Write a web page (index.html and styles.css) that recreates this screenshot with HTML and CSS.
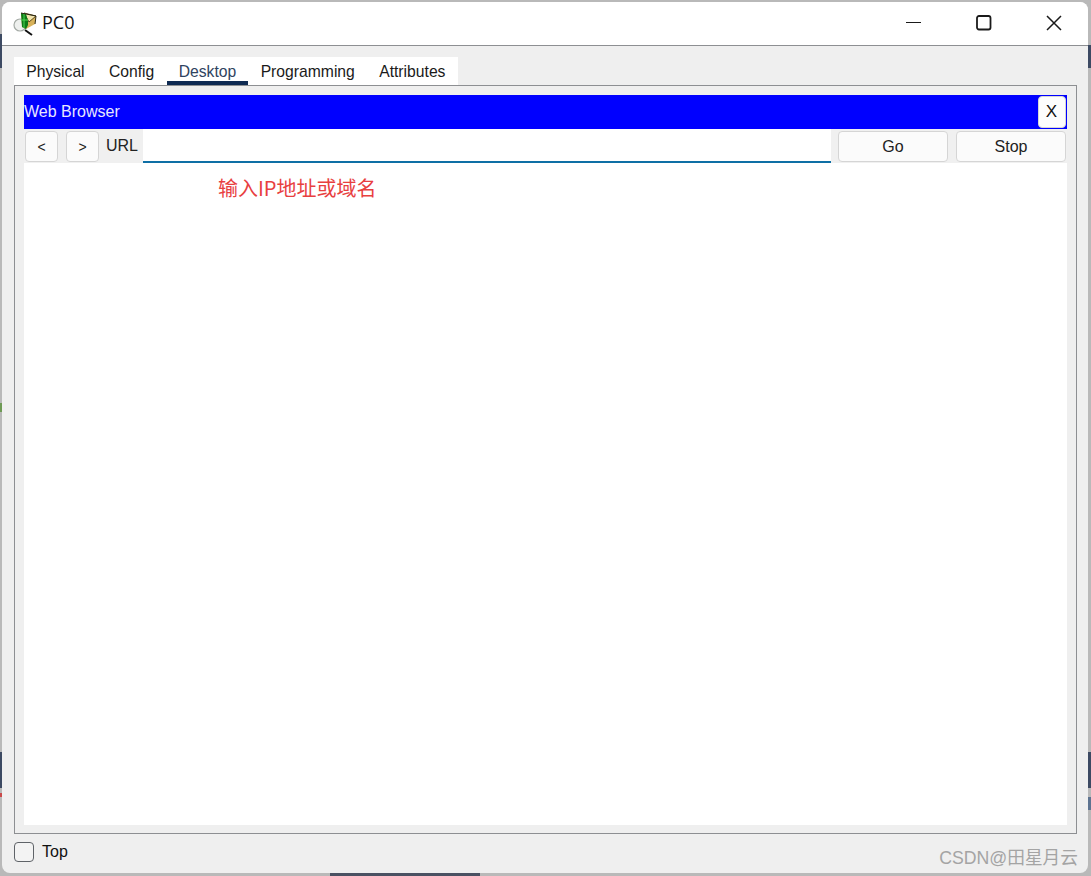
FILE: index.html
```html
<!DOCTYPE html>
<html lang="zh">
<head>
<meta charset="utf-8">
<title>PC0</title>
<link rel="stylesheet" href="styles.css">
</head>
<body>
<div class="window">
  <header class="titlebar">
    <svg class="appicon" width="26" height="26" viewBox="0 0 26 26">
      <circle cx="7" cy="15" r="6" fill="#eef0ee" stroke="#a4aaa5" stroke-width="1.2"/>
      <path d="M12 20l7 5" stroke="#111" stroke-width="2" fill="none"/>
      <path d="M8 3l15 3 -1 8 -9 5 -4 -2z" fill="#d8b25a"/>
      <path d="M11 3l12 3 -7 6z" fill="#f3e5ae" stroke="#5b4a1d" stroke-width="1"/>
      <path d="M8 3l5 1 2 7v4l-2 4 -4 -2z" fill="#0d7a16"/>
      <path d="M11 4v14M8 10h7" stroke="#4fd653" stroke-width="1" fill="none"/>
      <path d="M8 3l15 3 -1 8" stroke="#2d2a16" stroke-width="1" fill="none"/>
    </svg>
    <span class="wintitle">PC0</span>
    <div class="wincontrols">
      <svg class="wc" width="16" height="16" viewBox="0 0 16 16"><path d="M0 7.5h15" stroke="#1a1a1a" stroke-width="1.2"/></svg>
      <svg class="wc" width="16" height="16" viewBox="0 0 16 16"><rect x="1" y="1" width="13.5" height="13.5" rx="2" fill="none" stroke="#1a1a1a" stroke-width="1.8"/></svg>
      <svg class="wc" width="16" height="16" viewBox="0 0 16 16"><path d="M1 1l14 14M15 1L1 15" stroke="#1a1a1a" stroke-width="1.5"/></svg>
    </div>
  </header>
  <main class="content">
    <nav class="tabs">
      <span class="tab">Physical</span>
      <span class="tab">Config</span>
      <span class="tab active">Desktop</span>
      <span class="tab">Programming</span>
      <span class="tab">Attributes</span>
    </nav>
    <section class="panel">
      <div class="browser">
        <div class="browserhead">
          <span>Web Browser</span>
          <button class="closebtn">X</button>
        </div>
        <div class="toolbar">
          <button class="navbtn">&lt;</button>
          <button class="navbtn">&gt;</button>
          <span class="urllabel">URL</span>
          <div class="urlinput"></div>
          <button class="actbtn">Go</button>
          <button class="actbtn">Stop</button>
        </div>
        <div class="page">
          <p class="note">输入IP地址或域名</p>
        </div>
      </div>
    </section>
    <footer class="bottom">
      <span class="check"></span>
      <span class="toplabel">Top</span>
    </footer>
  </main>
</div>
<div class="watermark">CSDN@田星月云</div>
</body>
</html>
```

FILE: styles.css
```css
* { box-sizing: border-box; }
html, body { margin: 0; height: 100%; overflow: hidden; }
body {
  width: 1091px;
  height: 876px;
  padding: 2px 3px 3px 2px;
  font-family: "Liberation Sans", Arial, sans-serif;
  color: #111;
  background-color: #b9b9b9;
  background-repeat: no-repeat;
  background-image:
    linear-gradient(#b9b9b9 34px, #3d4a63 34px, #3d4a63 68px, #b9b9b9 68px, #b9b9b9 403px, #6e9a55 403px, #6e9a55 412px, #b9b9b9 412px, #b9b9b9 752px, #3d4a63 752px, #3d4a63 788px, #b9b9b9 788px, #b9b9b9 793px, #c9494a 793px, #c9494a 797px, #b9b9b9 797px),
    linear-gradient(#b9b9b9 45px, #3d4a63 45px, #3d4a63 68px, #b9b9b9 68px, #b9b9b9 752px, #3d4a63 752px, #3d4a63 788px, #b9b9b9 788px, #b9b9b9 797px, #5d7390 797px, #5d7390 810px, #b9b9b9 810px),
    linear-gradient(#4a5162, #4a5162);
  background-size: 4px 100%, 3px 100%, 150px 3px;
  background-position: 0 0, 100% 0, 330px 100%;
}
.window {
  height: 100%;
  display: flex;
  flex-direction: column;
  border-radius: 8px;
  overflow: hidden;
  background: #efefef;
}
.titlebar {
  flex: none;
  height: 44px;
  display: flex;
  align-items: center;
  padding-left: 11px;
  background: #fff;
  border-bottom: 1px solid #8d8f92;
}
.appicon { flex: none; margin-right: 3px; margin-top: -1px; }
.wintitle { font-size: 18px; font-family: "Open Sans", "Liberation Sans", sans-serif; margin-top: -4px; }
.wincontrols {
  margin-left: auto;
  display: flex;
  gap: 54px;
  padding-right: 26px;
  margin-top: -1px;
}
.content {
  flex: 1;
  min-height: 0;
  display: flex;
  flex-direction: column;
  padding: 11px 11px 0 12px;
}
.tabs {
  flex: none;
  align-self: flex-start;
  display: flex;
  height: 28px;
  background: #fff;
  font-size: 15.7px;
}
.tab {
  padding: 6px 12.2px 0;
  line-height: 18px;
  color: #1a1a1a;
  border-bottom: 4px solid transparent;
}
.tab.active { color: #2f4360; border-bottom-color: #0e2a52; }
.panel {
  flex: none;
  height: 749px;
  border: 1px solid #8d8f92;
  padding: 9px 9px 8px;
}
.browser {
  height: 100%;
  display: flex;
  flex-direction: column;
}
.browserhead {
  flex: none;
  height: 34px;
  display: flex;
  align-items: center;
  justify-content: space-between;
  background: #0000ff;
  color: #e8e8ff;
  font-size: 16px;
}
.closebtn {
  width: 28px;
  height: 32px;
  margin-right: 1px;
  padding: 0 1px 0 0;
  font: 17px "Liberation Sans", Arial, sans-serif;
  color: #111;
  background: #fdfdfd;
  border: 1px solid #d6d6d6;
  border-radius: 4px;
}
.toolbar {
  flex: none;
  height: 34px;
  display: flex;
  align-items: center;
  background: #f0f0f0;
}
.navbtn, .actbtn {
  height: 31px;
  padding: 2px 0 0;
  background: #fbfbfb;
  border: 1px solid #d5d5d5;
  border-radius: 4px;
  color: #222;
  font: 16px "Liberation Sans", Arial, sans-serif;
}
.navbtn { width: 33px; font-size: 14px; margin-left: 1px; }
.navbtn + .navbtn { margin-left: 8px; }
.urllabel { width: 44px; padding-left: 7px; font-size: 16px; color: #222; }
.urlinput {
  width: 688px;
  height: 34px;
  background: #fff;
  border-bottom: 2px solid #0e6fa5;
}
.actbtn { width: 110px; margin-left: 7px; }
.actbtn + .actbtn { margin-left: 8px; }
.page { flex: 1; min-height: 0; background: #fff; padding: 13px 0 0 194px; }
.note {
  margin: 0;
  font: 20px/24px "Noto Sans CJK SC", "Liberation Sans", sans-serif;
  color: #e8403f;
}
.bottom {
  flex: 1;
  display: flex;
  align-items: center;
  gap: 8px;
  padding-bottom: 4px;
}
.check {
  width: 20px;
  height: 20px;
  border: 1px solid #5f6368;
  border-radius: 4px;
  background: #f3f3f3;
}
.toplabel { font-size: 16px; }
.watermark {
  position: absolute;
  right: 13px;
  top: 848px;
  font-size: 17.7px;
  line-height: 20px;
  color: #a4a4a4;
  font-family: "Liberation Sans", "Noto Sans CJK SC", sans-serif;
}
```
